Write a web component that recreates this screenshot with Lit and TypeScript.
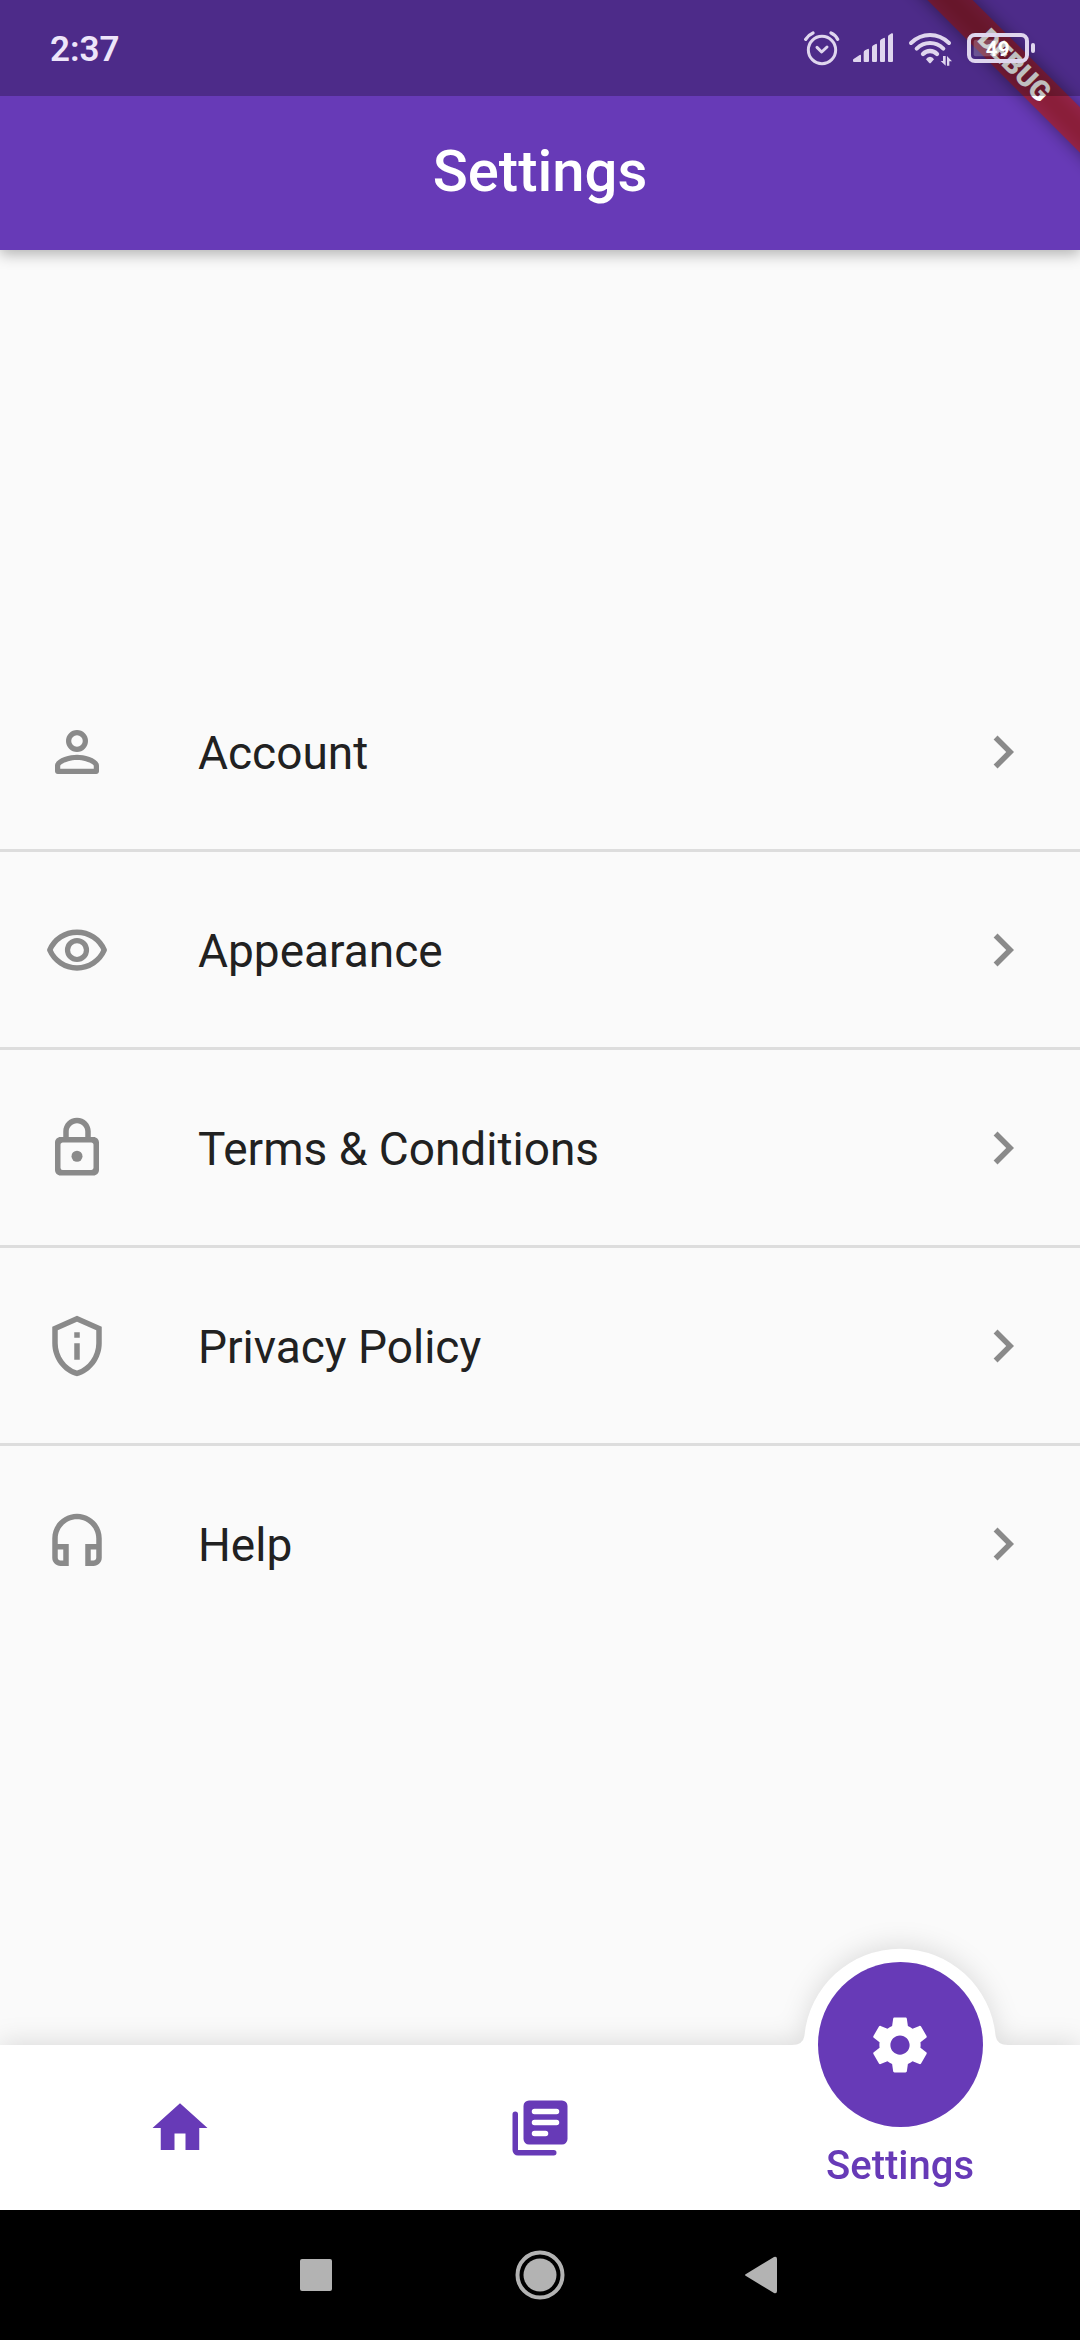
import { LitElement, html, svg, css } from "lit";
import { customElement, property, state } from "lit/decorators.js";

type IconName =
  | "person" | "eye" | "lock" | "shield" | "headset"
  | "chevron" | "home" | "library" | "gear";

const ICONS: Record<IconName, unknown> = {
  person: svg`
    <path fill-rule="evenodd" d="M12 4a4 4 0 1 0 0 8a4 4 0 1 0 0-8zm0 1.9a2.1 2.1 0 1 1 0 4.2a2.1 2.1 0 1 1 0-4.2z"/>
    <path fill-rule="evenodd" d="M12 13c-2.67 0-8 1.34-8 4v2c0 .55.45 1 1 1h14c.55 0 1-.45 1-1v-2c0-2.66-5.33-4-8-4zm6.1 5.1H5.9V17c0-.64 3.13-2.1 6.1-2.1s6.1 1.46 6.1 2.1v1.1z"/>`,
  eye: svg`
    <path fill="none" stroke="currentColor" stroke-width="2" stroke-linejoin="round" d="M2.1 12C3.8 8.1 7.6 5.5 12 5.5S20.2 8.1 21.9 12C20.2 15.9 16.4 18.5 12 18.5S3.8 15.9 2.1 12z"/>
    <circle cx="12" cy="12" r="3.45" fill="none" stroke="currentColor" stroke-width="1.9"/>`,
  lock: svg`
    <path fill-rule="evenodd" d="M18 8h-1V6c0-2.76-2.24-5-5-5S7 3.24 7 6v2H6c-1.1 0-2 .9-2 2v10c0 1.1.9 2 2 2h12c1.1 0 2-.9 2-2V10c0-1.1-.9-2-2-2zM9 6c0-1.66 1.34-3 3-3s3 1.34 3 3v2H9V6zm9 13.2c0 .44-.36.8-.8.8H6.8a.8.8 0 0 1-.8-.8v-8.4c0-.44.36-.8.8-.8h10.4c.44 0 .8.36.8.8v8.4z"/>
    <circle cx="12" cy="15" r="2"/>`,
  shield: svg`
    <path fill-rule="evenodd" d="M12 1L3 5v6c0 5.55 3.84 10.74 9 12 5.16-1.26 9-6.45 9-12V5l-9-4zm7 10c0 4.52-2.98 8.69-7 9.93-4.02-1.24-7-5.41-7-9.93V6.3l7-3.11 7 3.11V11zm-8 0h2v6h-2zm0-4h2v2h-2z"/>`,
  headset: svg`
    <path fill-rule="evenodd" d="M12 1c-4.97 0-9 4.03-9 9v7c0 1.66 1.34 3 3 3h3v-8H5v-2c0-3.87 3.13-7 7-7s7 3.13 7 7v2h-4v8h3c1.66 0 3-1.34 3-3v-7c0-4.97-4.03-9-9-9zM7 14v4H6c-.55 0-1-.45-1-1v-3h2zm12 3c0 .55-.45 1-1 1h-1v-4h2v3z"/>`,
  chevron: svg`<path d="M10 6L8.59 7.41 13.17 12l-4.58 4.59L10 18l6-6z"/>`,
  home: svg`<path d="M10 20v-6h4v6h5v-8h3L12 3 2 12h3v8z"/>`,
  library: svg`
    <path fill-rule="evenodd" d="M8 2h12a2 2 0 0 1 2 2v12a2 2 0 0 1-2 2H8a2 2 0 0 1-2-2V4a2 2 0 0 1 2-2zM10 5a1 1 0 0 0 0 2h8a1 1 0 0 0 0-2zM10 9a1 1 0 0 0 0 2h8a1 1 0 0 0 0-2zM10 13a1 1 0 0 0 0 2h4a1 1 0 0 0 0-2z"/>
    <path d="M3 6a1 1 0 0 0-1 1v13a2 2 0 0 0 2 2h13a1 1 0 0 0 0-2H4V7a1 1 0 0 0-1-1z"/>`,
  gear: svg`
    <path d="M19.43 12.98c.04-.32.07-.64.07-.98s-.03-.66-.07-.98l2.11-1.65c.19-.15.24-.42.12-.64l-2-3.46c-.12-.22-.39-.3-.61-.22l-2.49 1c-.52-.4-1.08-.73-1.69-.98l-.38-2.65C14.46 2.18 14.25 2 14 2h-4c-.25 0-.46.18-.49.42l-.38 2.65c-.61.25-1.17.59-1.69.98l-2.49-1c-.23-.09-.49 0-.61.22l-2 3.46c-.13.22-.07.49.12.64l2.11 1.65c-.04.32-.07.65-.07.98s.03.66.07.98l-2.11 1.65c-.19.15-.24.42-.12.64l2 3.46c.12.22.39.3.61.22l2.49-1c.52.4 1.08.73 1.69.98l.38 2.65c.03.24.24.42.49.42h4c.25 0 .46-.18.49-.42l.38-2.65c.61-.25 1.17-.59 1.69-.98l2.49 1c.23.09.49 0 .61-.22l2-3.46c.12-.22.07-.49-.12-.64l-2.11-1.65zM12 15.5c-1.93 0-3.5-1.57-3.5-3.5s1.57-3.5 3.5-3.5 3.5 1.57 3.5 3.5-1.57 3.5-3.5 3.5z"/>`,
};

@customElement("material-icon")
export class MaterialIcon extends LitElement {
  @property() name: IconName = "person";

  static styles = css`
    :host { display: block; width: 66px; height: 66px; flex: none; }
    .glyph { display: block; width: 100%; height: 100%; fill: currentColor; }
  `;

  render() {
    return html`<svg class="glyph" viewBox="0 0 24 24" aria-hidden="true">${ICONS[this.name]}</svg>`;
  }
}

@customElement("status-bar")
export class StatusBar extends LitElement {
  static styles = css`
    :host {
      display: flex;
      align-items: center;
      justify-content: space-between;
      height: 96px;
      padding: 0 44px 0 50px;
      background: rgba(0, 0, 0, 0.25);
      color: #ede5fa;
    }
    .time { padding-top: 4px; font-size: 35px; line-height: 40px; font-weight: 600; }
    .icons { display: flex; align-items: center; gap: 13px; color: #dfd6ee; }
    .icon { display: block; height: 37px; fill: currentColor; }
    .alarm { width: 37px; }
    .signal { width: 41px; }
    .wifi { width: 46px; }
    .battery { width: 70px; }
    .line { fill: none; stroke: currentColor; stroke-linecap: round; stroke-linejoin: round; }
    .level { fill: rgba(255, 255, 255, 0.22); }
    .charge { fill: #ffffff; font: 700 62px Roboto, sans-serif; text-anchor: middle; }
  `;

  render() {
    return html`
      <span class="time">2:37</span>
      <span class="icons">
        <svg class="icon alarm" viewBox="69 90 111 111" role="img" aria-label="Alarm set">
          <circle class="line" cx="126" cy="150" r="41" stroke-width="9"/>
          <path class="line" stroke-width="9" d="M111 142l14 14 16-15"/>
          <path class="line" stroke-width="10" d="M77 118q8-13 22-19M153 99q14 6 20 19"/>
        </svg>
        <svg class="icon signal" viewBox="219 90 123 111" role="img" aria-label="Mobile signal">
          <path d="M219 180q0-3 3-4l17-11q4-2 4 2v19h-21q-3 0-3-3zM251 158q0-5 4-7l8-4q4-2 4 3v33q0 3-3 3h-10q-3 0-3-3zM276 142q0-4 4-6l7-4q4-2 4 3v48q0 3-3 3h-9q-3 0-3-3zM300 124q0-4 4-6l7-4q4-2 4 3v66q0 3-3 3h-9q-3 0-3-3zM324 110q0-4 4-6l7-4q4-2 4 3v80q0 3-3 3h-9q-3 0-3-3z"/>
        </svg>
        <svg class="icon wifi" viewBox="381 90 138 111" role="img" aria-label="Wi-Fi">
          <path class="line" stroke-width="12" d="M393 129q25-24 57-24t57 24"/>
          <path class="line" stroke-width="12" d="M410 146q17-17 40-17t40 17"/>
          <path class="line" stroke-width="13" d="M429 162q9-9 21-9t21 9"/>
          <path d="M438 178q4-8 12-8t12 8l-9 10q-3 3-6 0z"/>
          <path d="M489 168h8v29l-15-14h7zM501 197h7v-13h8l-15-16z"/>
        </svg>
        <svg class="icon battery" viewBox="558 90 210 111" role="img" aria-label="Battery 49 percent">
          <rect class="line" x="567" y="105" width="174" height="78" rx="18" stroke-width="12"/>
          <rect class="level" x="581" y="119" width="76" height="50" rx="6"/>
          <rect x="753" y="129" width="12" height="30" rx="6"/>
          <text class="charge" x="653" y="168">49</text>
        </svg>
      </span>
    `;
  }
}

@customElement("debug-banner")
export class DebugBanner extends LitElement {
  static styles = css`
    :host { display: block; width: 220px; height: 220px; pointer-events: none; }
    .ribbon { display: block; width: 100%; height: 100%; overflow: hidden; }
    .text { fill: #ffffff; font: 900 28px Roboto, sans-serif; text-anchor: middle; }
  `;

  render() {
    return html`
      <svg class="ribbon" viewBox="0 0 220 220">
        <defs>
          <filter id="soft" x="-20%" y="-200%" width="140%" height="500%">
            <feGaussianBlur stdDeviation="9"/>
          </filter>
        </defs>
        <g transform="translate(155 65) rotate(45)">
          <rect x="-180" y="-15" width="360" height="30" fill="#000" fill-opacity=".45" filter="url(#soft)"/>
          <rect x="-180" y="-16" width="360" height="32" fill="#b71c1c" fill-opacity=".63"/>
          <text class="text" y="10">DEBUG</text>
        </g>
      </svg>
    `;
  }
}

interface Entry { icon: IconName; label: string; }

@customElement("settings-list")
export class SettingsList extends LitElement {
  @property({ attribute: false }) entries: Entry[] = [];

  static styles = css`
    :host { display: block; }
    .list { list-style: none; margin: 0; padding: 0; display: flex; flex-direction: column; gap: 44px; }
    .item { position: relative; }
    .item + .item::before {
      content: "";
      position: absolute;
      left: 0;
      right: 0;
      top: -24px;
      height: 3px;
      background: #dddddd;
    }
    .tile {
      display: flex;
      align-items: center;
      width: 100%;
      height: 154px;
      padding: 0 44px;
      gap: 88px;
      border: 0;
      background: none;
      color: #8a8a8a;
      font: inherit;
      text-align: left;
      cursor: pointer;
    }
    .label { flex: 1; padding-top: 2px; font-size: 46px; line-height: 54px; color: #212121; }
  `;

  render() {
    return html`
      <ul class="list">
        ${this.entries.map((e) => html`
          <li class="item">
            <button class="tile" type="button">
              <material-icon name=${e.icon}></material-icon>
              <span class="label">${e.label}</span>
              <material-icon name="chevron"></material-icon>
            </button>
          </li>`)}
      </ul>
    `;
  }
}

@customElement("bottom-nav")
export class BottomNav extends LitElement {
  @property({ attribute: false }) entries: Entry[] = [];
  @state() private selected = 2;

  static styles = css`
    :host { display: block; height: 165px; position: relative; }
    .backdrop {
      position: absolute;
      inset: 0;
      display: grid;
      grid-auto-flow: column;
      grid-auto-columns: 1fr;
      background: #ffffff;
      filter: drop-shadow(0 -3px 13px rgba(0, 0, 0, 0.12));
    }
    .bump { justify-self: center; width: 220px; height: 110px; margin-top: -97px; fill: #ffffff; }
    .tabs {
      position: relative;
      display: grid;
      grid-auto-flow: column;
      grid-auto-columns: 1fr;
      height: 100%;
    }
    .tab {
      display: flex;
      flex-direction: column;
      align-items: center;
      justify-content: center;
      gap: 14px;
      padding: 0;
      border: 0;
      background: none;
      color: #673ab7;
      font: inherit;
      cursor: pointer;
    }
    .active { justify-content: flex-start; }
    .disc {
      display: flex;
      align-items: center;
      justify-content: center;
      flex: none;
      width: 165px;
      height: 165px;
      margin-top: -83px;
      border-radius: 50%;
      background: #673ab7;
      color: #ffffff;
    }
    .label { font-size: 40px; line-height: 50px; font-weight: 500; }
  `;

  render() {
    return html`
      <div class="backdrop">
        ${this.entries.map((_, i) => i === this.selected
          ? html`<svg class="bump" viewBox="0 0 220 110" aria-hidden="true">
              <path d="M2 97Q13 97 14.4 88A96 96 0 0 1 205.6 88Q207 97 218 97V110H2z"/>
            </svg>`
          : html`<span></span>`)}
      </div>
      <nav class="tabs" aria-label="Main">
        ${this.entries.map((e, i) => i === this.selected
          ? html`<button class="tab active" type="button" aria-current="page">
              <span class="disc"><material-icon name=${e.icon}></material-icon></span>
              <span class="label">${e.label}</span>
            </button>`
          : html`<button class="tab" type="button" aria-label=${e.label}
              @click=${() => { this.selected = i; }}>
              <material-icon name=${e.icon}></material-icon>
            </button>`)}
      </nav>
    `;
  }
}

@customElement("system-nav")
export class SystemNav extends LitElement {
  static styles = css`
    :host {
      display: grid;
      grid-template-columns: repeat(3, 1fr);
      height: 130px;
      padding: 0 19%;
      background: #000000;
    }
    .key {
      display: flex;
      align-items: center;
      justify-content: center;
      padding: 0;
      border: 0;
      background: none;
      color: #b3b3b3;
      cursor: pointer;
    }
    .shape { display: block; width: 50px; height: 50px; fill: currentColor; }
  `;

  render() {
    return html`
      <button class="key" type="button" aria-label="Recent apps">
        <svg class="shape" viewBox="0 0 50 50"><rect x="8" y="9" width="32" height="32" rx="2"/></svg>
      </button>
      <button class="key" type="button" aria-label="Home screen">
        <svg class="shape" viewBox="0 0 50 50">
          <circle cx="25" cy="25" r="22.5" fill="none" stroke="currentColor" stroke-width="4"/>
          <circle cx="25" cy="25" r="16.5"/>
        </svg>
      </button>
      <button class="key" type="button" aria-label="Back">
        <svg class="shape" viewBox="0 0 50 50">
          <path d="M8 24L36 7q3-1 3 2v32q0 3-3 2L8 26q-2-1 0-2z"/>
        </svg>
      </button>
    `;
  }
}

@customElement("app-root")
export class AppRoot extends LitElement {
  private settings: Entry[] = [
    { icon: "person", label: "Account" },
    { icon: "eye", label: "Appearance" },
    { icon: "lock", label: "Terms & Conditions" },
    { icon: "shield", label: "Privacy Policy" },
    { icon: "headset", label: "Help" },
  ];

  private tabs: Entry[] = [
    { icon: "home", label: "Home" },
    { icon: "library", label: "Library" },
    { icon: "gear", label: "Settings" },
  ];

  static styles = css`
    :host {
      display: flex;
      flex-direction: column;
      min-height: 100vh;
      background: #fafafa;
      font-family: Roboto, sans-serif;
    }
    .header {
      position: relative;
      z-index: 1;
      background: #673ab7;
      box-shadow: 0 4px 14px rgba(0, 0, 0, 0.3);
    }
    .banner { position: absolute; top: 0; right: 0; }
    .status { position: relative; }
    .appbar {
      display: flex;
      align-items: center;
      justify-content: center;
      box-sizing: border-box;
      height: 154px;
      padding-bottom: 4px;
    }
    .title { margin: 0; color: #ffffff; font-size: 58px; line-height: 64px; font-weight: 500; }
    .body { flex: 1; display: flex; flex-direction: column; justify-content: center; }
    .system { position: relative; }
  `;

  render() {
    return html`
      <header class="header">
        <debug-banner class="banner"></debug-banner>
        <status-bar class="status"></status-bar>
        <div class="appbar"><h1 class="title">Settings</h1></div>
      </header>
      <main class="body"><settings-list .entries=${this.settings}></settings-list></main>
      <bottom-nav .entries=${this.tabs}></bottom-nav>
      <system-nav class="system"></system-nav>
    `;
  }
}
